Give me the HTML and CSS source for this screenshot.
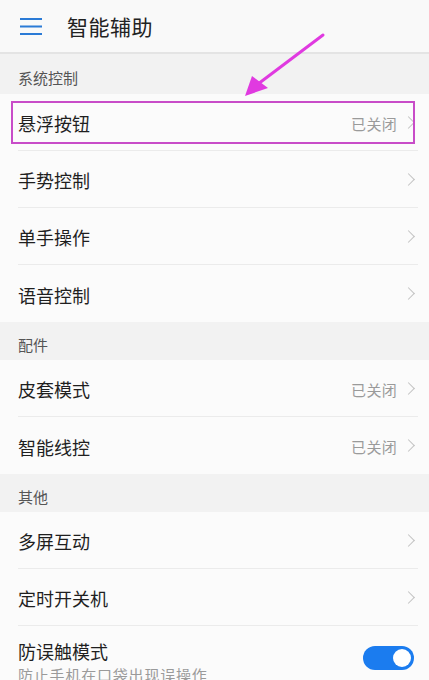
FILE: index.html
```html
<!DOCTYPE html>
<html lang="zh-CN">
<head>
  <meta charset="UTF-8">
  <meta name="viewport" content="width=device-width, initial-scale=1.0">
  <title>智能辅助</title>
  <link rel="stylesheet" href="styles.css">
</head>
<body>

<div class="topbar">
  <svg class="menu-icon" width="24" height="18" viewBox="0 0 24 18">
    <path d="M1 2h22M1 9.5h22M1 17h22" stroke="#2b7bd6" stroke-width="2.2" fill="none"/>
  </svg>
  <h1 class="title">智能辅助</h1>
</div>

<div class="section-title first">系统控制</div>
<div class="list">
  <div class="row marked">
    <span class="label">悬浮按钮</span>
    <span class="value">已关闭</span>
    <span class="chevron"></span>
  </div>
  <div class="row">
    <span class="label">手势控制</span>
    <span class="chevron"></span>
  </div>
  <div class="row">
    <span class="label">单手操作</span>
    <span class="chevron"></span>
  </div>
  <div class="row">
    <span class="label">语音控制</span>
    <span class="chevron"></span>
  </div>
</div>

<div class="section-title">配件</div>
<div class="list">
  <div class="row">
    <span class="label">皮套模式</span>
    <span class="value">已关闭</span>
    <span class="chevron"></span>
  </div>
  <div class="row">
    <span class="label">智能线控</span>
    <span class="value">已关闭</span>
    <span class="chevron"></span>
  </div>
</div>

<div class="section-title">其他</div>
<div class="list">
  <div class="row">
    <span class="label">多屏互动</span>
    <span class="chevron"></span>
  </div>
  <div class="row">
    <span class="label">定时开关机</span>
    <span class="chevron"></span>
  </div>
  <div class="row tall">
    <div class="texts">
      <span class="label">防误触模式</span>
      <span class="sub">防止手机在口袋出现误操作</span>
    </div>
    <span class="switch on"></span>
  </div>
</div>

<!-- annotation arrow drawn over the page -->
<svg class="arrow" width="429" height="110" viewBox="0 0 429 110">
  <path d="M323 35 L258 84" stroke="#e03ae0" stroke-width="3" fill="none" stroke-linecap="round"/>
  <polygon points="245,96 252,76 268,88" fill="#e03ae0"/>
</svg>

</body>
</html>
```

FILE: styles.css
```css
body {
  margin: 0;
  padding: 0;
  width: 429px;
  height: 680px;
  overflow: hidden;
  position: relative;
  background-color: #fbfbfb;
  font-family: "Noto Sans CJK SC", "Noto Sans", sans-serif;
  color: #1f1f1f;
}
.topbar {
  height: 52px;
  display: flex;
  align-items: center;
  background-color: #f9f9f9;
  border-bottom: 2px solid #e4e4e4;
}
.menu-icon {
  margin-left: 19px;
  margin-top: -1px;
}
.title {
  margin: 0 0 0 24px;
  font-size: 21px;
  font-weight: normal;
  color: #222;
  letter-spacing: 0.5px;
}
.section-title {
  height: 38px;
  box-sizing: border-box;
  padding: 12px 0 0 18px;
  background-color: #f2f2f2;
  font-size: 15px;
  color: #555;
  line-height: 22px;
}
.section-title.first {
  height: 40px;
  padding-top: 13px;
}
.list {
  background-color: #fbfbfb;
}
.row {
  height: 57px;
  margin-left: 18px;
  margin-right: 11px;
  display: flex;
  align-items: center;
  border-bottom: 1px solid #ebebeb;
  box-sizing: border-box;
  position: relative;
}
.list .row:last-child {
  border-bottom: none;
}
.label {
  font-size: 18px;
  flex: 1;
  padding-top: 2px;
}
.value {
  font-size: 15px;
  color: #9a9a9a;
  margin-right: 7px;
  padding-top: 2px;
  letter-spacing: 0.3px;
}
.chevron {
  width: 8px;
  height: 8px;
  border-top: 1.5px solid #c2c2c2;
  border-right: 1.5px solid #c2c2c2;
  transform: rotate(45deg);
  margin-right: 5px;
}
.marked::after {
  content: "";
  position: absolute;
  left: -7px;
  right: 3px;
  top: 7px;
  bottom: 6px;
  border: 2px solid #c84cc8;
}
.tall {
  align-items: flex-start;
  padding-top: 10px;
}
.texts {
  flex: 1;
  display: flex;
  flex-direction: column;
}
.texts .label {
  line-height: 26px;
}
.sub {
  font-size: 15px;
  color: #9a9a9a;
  line-height: 22px;
  letter-spacing: 0.8px;
}
.switch {
  width: 51px;
  height: 24px;
  border-radius: 12px;
  background-color: #1b7cef;
  position: relative;
  margin-top: 10px;
  margin-right: 4px;
}
.switch::after {
  content: "";
  position: absolute;
  right: 3px;
  top: 3px;
  width: 18px;
  height: 18px;
  border-radius: 50%;
  background-color: #fff;
}
.arrow {
  position: absolute;
  left: 0;
  top: 0;
}
```
